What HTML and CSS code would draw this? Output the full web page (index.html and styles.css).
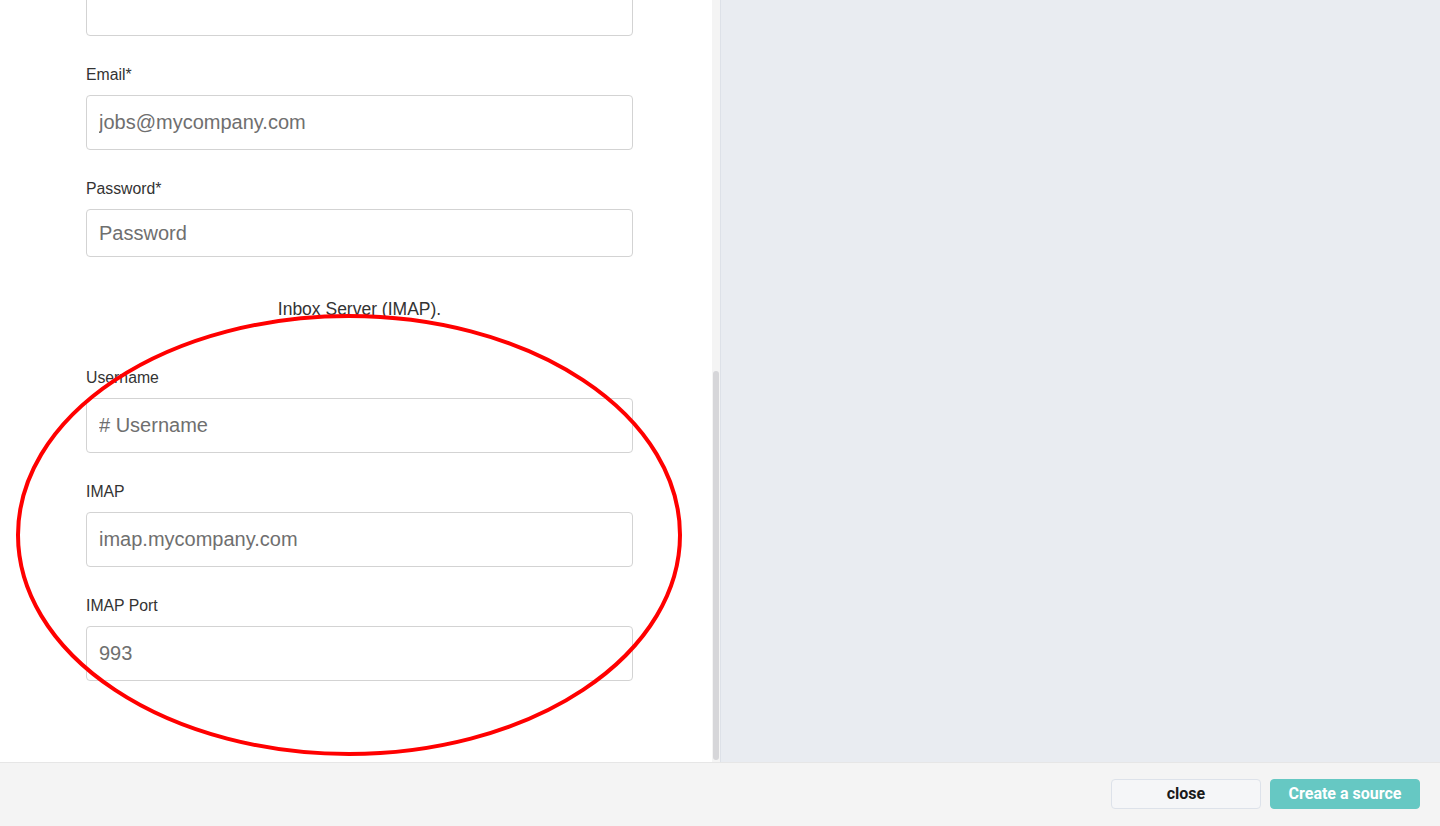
FILE: index.html
```html
<!DOCTYPE html>
<html lang="en">
<head>
    <meta charset="UTF-8">
    <meta name="viewport" content="width=device-width, initial-scale=1.0">
    <title>Create a source</title>
    <link rel="stylesheet" href="styles.css">
</head>
<body>
    <div class="page">
        <div class="main">
            <div class="side-panel">
                <div class="form-scroll">
                    <form class="source-form">
                        <div class="field field-cut">
                            <input class="text-input" type="text">
                        </div>

                        <div class="field">
                            <label class="field-label">Email*</label>
                            <input class="text-input" type="text" placeholder="jobs@mycompany.com">
                        </div>

                        <div class="field">
                            <label class="field-label">Password*</label>
                            <input class="text-input short" type="password" placeholder="Password">
                        </div>

                        <p class="section-title">Inbox Server (IMAP).</p>

                        <div class="field">
                            <label class="field-label">Username</label>
                            <input class="text-input" type="text" placeholder="# Username">
                        </div>

                        <div class="field">
                            <label class="field-label">IMAP</label>
                            <input class="text-input" type="text" placeholder="imap.mycompany.com">
                        </div>

                        <div class="field">
                            <label class="field-label">IMAP Port</label>
                            <input class="text-input" type="text" placeholder="993">
                        </div>
                    </form>
                </div>
                <div class="scroll-track">
                    <div class="scroll-thumb"></div>
                </div>
            </div>
            <div class="preview-panel"></div>
        </div>

        <div class="footer">
            <button class="btn btn-close" type="button">close</button>
            <button class="btn btn-create" type="button">Create a source</button>
        </div>

        <!-- annotation drawn over the screenshot -->
        <svg class="annotation" width="720" height="780" viewBox="0 0 720 780">
            <ellipse cx="349" cy="535" rx="331" ry="219" fill="none" stroke="#ff0000" stroke-width="4"/>
        </svg>
    </div>
</body>
</html>
```

FILE: styles.css
```css
* {
    box-sizing: border-box;
}
html, body {
    margin: 0;
    padding: 0;
}
body {
    font-family: 'Liberation Sans', Arial, Helvetica, sans-serif;
    color: #333;
    background: #fff;
}
.page {
    position: relative;
    width: 1440px;
    height: 826px;
    display: flex;
    flex-direction: column;
    overflow: hidden;
}
.main {
    display: flex;
    height: 762px;
}
.side-panel {
    display: flex;
    width: 720px;
    background: #fff;
}
.form-scroll {
    width: 712px;
    overflow: hidden;
}
.source-form {
    width: 633px;
    padding-left: 86px;
}
.field {
    display: flex;
    flex-direction: column;
    gap: 10px;
    margin-bottom: 29px;
}
.field-cut {
    margin-top: -19px;
}
.field-label {
    font-size: 15.8px;
    line-height: 20px;
    color: #333;
}
.text-input {
    display: block;
    width: 547px;
    height: 55px;
    padding: 0 12px;
    border: 1px solid #d3d3d3;
    border-radius: 4px;
    font-family: 'Liberation Sans', Arial, Helvetica, sans-serif;
    font-size: 20px;
    color: #555;
    background: #fff;
    outline: none;
}
.text-input.short {
    height: 48px;
}
.text-input::placeholder {
    color: #6f6f6f;
}
/* margin-top collapses with the field's 29px bottom margin */
.section-title {
    margin: 42px 0 49px;
    font-size: 17.5px;
    line-height: 20px;
    text-align: center;
    color: #333;
}
.scroll-track {
    width: 8px;
    background: #f4f4f4;
    padding: 371px 1px 2px 1px;
}
.scroll-thumb {
    height: 389px;
    border-radius: 3px;
    background: #d6d6d9;
}
.preview-panel {
    flex: 1;
    background: #e9ecf1;
    border-left: 1px solid #dde1e8;
}
.footer {
    flex: 1;
    display: flex;
    justify-content: flex-end;
    align-items: flex-start;
    gap: 9px;
    padding: 16px 20px 0 0;
    background: #f4f4f4;
    border-top: 1px solid #e6e6e6;
}
.btn {
    width: 150px;
    height: 30px;
    border-radius: 4px;
    font-family: Roboto, 'Liberation Sans', sans-serif;
    font-weight: 700;
    font-size: 16px;
    line-height: 1;
    cursor: pointer;
}
.btn-close {
    background: #f5f6f8;
    border: 1px solid #dde2ea;
    color: #1a1a1a;
}
.btn-create {
    background: #66c8c3;
    border: 1px solid #66c8c3;
    color: #fff;
}
.annotation {
    position: absolute;
    left: 0;
    top: 0;
    pointer-events: none;
}
```
